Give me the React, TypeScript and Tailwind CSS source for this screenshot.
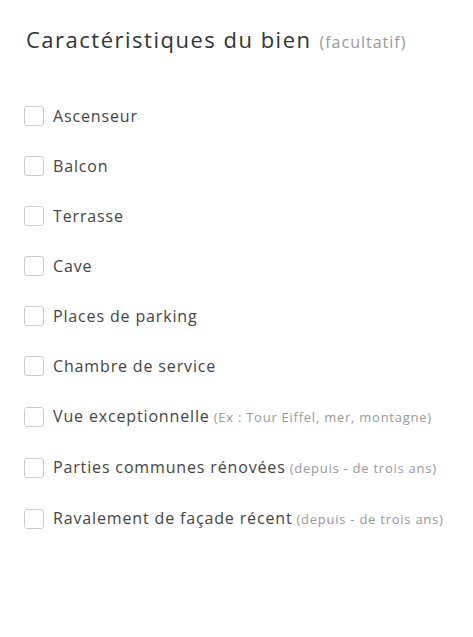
import React from "react";

const items: { label: string; hint?: string }[] = [
  { label: "Ascenseur" },
  { label: "Balcon" },
  { label: "Terrasse" },
  { label: "Cave" },
  { label: "Places de parking" },
  { label: "Chambre de service" },
  { label: "Vue exceptionnelle", hint: "(Ex : Tour Eiffel, mer, montagne)" },
  { label: "Parties communes rénovées", hint: "(depuis - de trois ans)" },
  { label: "Ravalement de façade récent", hint: "(depuis - de trois ans)" },
];

export default function App() {
  const [checked, setChecked] = React.useState<Record<number, boolean>>({});

  return (
    <div className="min-h-screen bg-white px-6 pt-6 font-['Open_Sans',sans-serif]">
      <h2 className="flex items-baseline gap-[8px] pl-[2px] leading-[30px] text-[#333]">
        <span className="text-[22px] tracking-[1.5px]">Caractéristiques du bien</span>
        <span className="text-[16px] tracking-[1px] text-[#999]">(facultatif)</span>
      </h2>

      <ul className="mt-[49px] flex flex-col gap-[30px]">
        {items.map((item, i) => (
          <li key={item.label}>
            <label className="flex cursor-pointer items-center gap-[9px]">
              <input
                type="checkbox"
                className="peer sr-only"
                checked={!!checked[i]}
                onChange={() => setChecked((c) => ({ ...c, [i]: !c[i] }))}
              />
              <span className="h-5 w-5 shrink-0 rounded-[3px] border border-[#ccc] bg-white peer-checked:border-[#333] peer-checked:bg-[#333]" />
              <span className="text-[16px] leading-5 tracking-[0.85px] text-[#444]">
                {item.label}
                {item.hint && (
                  <span className="ml-[4px] text-[13px] tracking-[0.75px] text-[#999]">{item.hint}</span>
                )}
              </span>
            </label>
          </li>
        ))}
      </ul>
    </div>
  );
}
